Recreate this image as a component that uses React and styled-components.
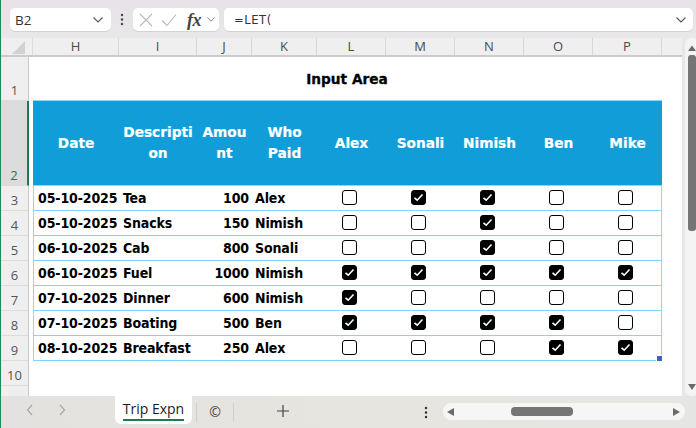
import React from "react";
import styled, { createGlobalStyle } from "styled-components";

const Global = createGlobalStyle`
  html, body { margin: 0; padding: 0; background: #e8e6e8; }
  * { box-sizing: border-box; }
`;

const columns = [
  { key: "H", w: 86 },
  { key: "I", w: 78 },
  { key: "J", w: 55 },
  { key: "K", w: 65 },
  { key: "L", w: 69 },
  { key: "M", w: 69 },
  { key: "N", w: 69 },
  { key: "O", w: 69 },
  { key: "P", w: 69 },
];
const gridTemplate = columns.map((c) => `${c.w}px`).join(" ");

const rows = [
  ["05-10-2025", "Tea", 100, "Alex", [0, 1, 1, 0, 0]],
  ["05-10-2025", "Snacks", 150, "Nimish", [0, 0, 1, 0, 0]],
  ["06-10-2025", "Cab", 800, "Sonali", [0, 0, 1, 0, 0]],
  ["06-10-2025", "Fuel", 1000, "Nimish", [1, 1, 1, 1, 1]],
  ["07-10-2025", "Dinner", 600, "Nimish", [1, 0, 0, 0, 0]],
  ["07-10-2025", "Boating", 500, "Ben", [1, 1, 1, 1, 0]],
  ["08-10-2025", "Breakfast", 250, "Alex", [0, 0, 0, 1, 1]],
];
const rowNums = [
  { n: 1, h: 44 },
  { n: 2, h: 85, active: true },
  { n: 3, h: 25 },
  { n: 4, h: 25 },
  { n: 5, h: 25 },
  { n: 6, h: 25 },
  { n: 7, h: 25 },
  { n: 8, h: 25 },
  { n: 9, h: 25 },
  { n: 10, h: 25 },
];

const Page = styled.div`
  width: 696px;
  height: 428px;
  overflow: hidden;
  display: flex;
  flex-direction: column;
  background: #e8e6e8;
  border-left: 1px solid #1f8a55;
  font-family: "Liberation Sans", Arial, sans-serif;
`;

const FormulaBar = styled.div`
  height: 38px;
  flex: none;
  display: flex;
  align-items: flex-start;
  padding: 8px 3px 0 9px;
  background: linear-gradient(#e6e2e7, #eae7ea);
  font-family: "Open Sans", sans-serif;
  font-size: 13px;
  color: #333;
`;

const Field = styled.div`
  height: 23px;
  background: #fff;
  border-radius: 5px;
  box-shadow: 0 1px 0 #d4d2d4;
  display: flex;
  align-items: center;
`;
const NameBox = styled(Field)`
  width: 101px;
  padding: 0 7px 0 5px;
  justify-content: space-between;
  font-size: 13.5px;
`;
const Kebab = styled.div`
  width: 22px;
  flex: none;
  display: flex;
  justify-content: center;
  height: 23px;
  align-items: center;
`;
const FnBox = styled(Field)`
  width: 86px;
  padding-left: 6px;
  gap: 8px;
`;
const FormulaInput = styled(Field)`
  margin-left: 5px;
  width: 469px;
  padding: 0 6px 0 10px;
  justify-content: space-between;
  font-family: "DejaVu Sans", sans-serif;
  font-size: 11.5px;
  letter-spacing: 0.6px;
`;
const FxText = styled.span`
  font-family: "Liberation Serif", serif;
  font-style: italic;
  font-weight: 700;
  font-size: 18px;
  line-height: 20px;
  color: #444;
  margin-left: 2px;
  letter-spacing: -0.5px;
`;
const FxChevron = styled.svg`
  margin-left: -3px;
`;

const Middle = styled.div`
  flex: 1;
  min-height: 0;
  display: flex;
`;
const SheetPane = styled.div`
  width: 681px;
  flex: none;
  display: flex;
  flex-direction: column;
  background: #fff;
`;
const ColHeaderRow = styled.div`
  height: 19px;
  flex: none;
  display: flex;
  background: #efefef;
  border-bottom: 2px solid #cbcbcb;
`;
const Corner = styled.div`
  width: 32px;
  flex: none;
  border-right: 1px solid #dcdcdc;
  display: flex;
  justify-content: flex-end;
  align-items: flex-end;
  padding: 0 7px 1px 0;
`;
const ColHeader = styled.div`
  width: ${(p) => p.$w}px;
  flex: none;
  text-align: center;
  font-size: 13px;
  line-height: 17px;
  color: #4a4a4a;
  border-right: 1px solid #d8d8d8;
  font-family: "Open Sans", sans-serif;
`;

const SheetBody = styled.div`
  flex: 1;
  min-height: 0;
  display: flex;
`;
const RowHeaders = styled.div`
  width: 28px;
  flex: none;
  display: flex;
  flex-direction: column;
  background: #efefef;
  border-right: 1px solid #c9c9c9;
`;
const RowHeader = styled.div`
  height: ${(p) => p.$h}px;
  flex: none;
  display: flex;
  align-items: flex-end;
  justify-content: center;
  padding-bottom: 1px;
  font-family: "Open Sans", sans-serif;
  font-size: 13px;
  line-height: 17px;
  margin-right: ${(p) => (p.$active ? "-1px" : "0")};
  color: ${(p) => (p.$active ? "#1f7a4c" : "#555")};
  background: ${(p) => (p.$active ? "#dcdcdc" : "transparent")};
  border-bottom: 1px solid #dcdcdc;
  border-right: ${(p) => (p.$active ? "2px solid #1f7a4c" : "none")};
`;

const Cells = styled.div`
  flex: 1;
  padding-left: 4px;
  font-family: "DejaVu Sans", Verdana, sans-serif;
  font-weight: 700;
  color: #000;
`;
const Title = styled.div`
  height: 43px;
  width: 628px;
  display: flex;
  align-items: center;
  justify-content: center;
  font-size: 13.7px;
  -webkit-text-stroke: 0.3px #000;
`;
const Table = styled.div`
  width: 629px;
  position: relative;
  border-left: 1px solid #8ad9f7;
  border-right: 1px solid #8ad9f7;
`;
const HeadRow = styled.div`
  height: 86px;
  display: grid;
  grid-template-columns: ${gridTemplate};
  background: #109dd8;
  color: #fff;
  margin: 0 -1px;
  border-top: 1px solid #8ad9f7;
  border-bottom: 1px solid #8ad9f7;
`;
const HeadCell = styled.div`
  display: flex;
  align-items: center;
  justify-content: center;
  text-align: center;
  padding: 0 1px;
  font-size: 13.7px;
  line-height: 21px;
  overflow-wrap: anywhere;
  min-width: 0;
  -webkit-text-stroke: 0.2px #fff;
`;
const DataRow = styled.div`
  height: 25px;
  display: grid;
  grid-template-columns: ${gridTemplate};
  align-items: center;
  margin-left: -1px;
  border-bottom: 1px solid #7fd6fa;
  font-family: "DejaVu Sans Condensed", "DejaVu Sans", sans-serif;
  font-stretch: condensed;
  font-size: 14px;
  letter-spacing: -0.12px;
`;
const TextCell = styled.div`
  padding: 0 0 0 ${(p) => p.$pad}px;
  white-space: nowrap;
`;
const NumCell = styled.div`
  text-align: right;
  padding: 0 3px 0 0;
  white-space: nowrap;
`;
const CheckCell = styled.div`
  display: flex;
  justify-content: center;
  padding: 0 4px 2px 0;
`;
const Box = styled.div`
  width: 15px;
  height: 15px;
  border-radius: 3px;
  border: 1.5px solid #000;
  background: ${(p) => (p.$on ? "#000" : "#fff")};
  display: flex;
  align-items: center;
  justify-content: center;
`;
const Handle = styled.div`
  position: absolute;
  right: -1px;
  bottom: 0;
  width: 5px;
  height: 5px;
  background: #2a6fb8;
  border-left: 1px solid #fff;
  border-top: 1px solid #fff;
  box-sizing: content-box;
`;

const VScroll = styled.div`
  width: 14px;
  margin-left: 3px;
  flex: none;
  background: #f4f4f4;
  border-radius: 6px;
  display: flex;
  flex-direction: column;
  align-items: center;
  padding: 6px 0 5px;
  height: 358px;
  justify-content: space-between;
`;
const VThumb = styled.div`
  width: 8px;
  height: 176px;
  border-radius: 3px;
  background: #757575;
  margin-top: 3px;
  margin-bottom: auto;
`;

const BottomBar = styled.div`
  height: 32px;
  flex: none;
  display: flex;
  background: linear-gradient(90deg, #e4e2e0, #e6e5df 60%, #e5e5e3);
`;
const NavArea = styled.div`
  width: 114px;
  flex: none;
  display: flex;
  gap: 24px;
  padding: 8px 0 0 25px;
`;
const Tab = styled.div`
  width: 77px;
  height: 28px;
  flex: none;
  background: #fff;
  border-radius: 0 0 6px 6px;
  font-family: "Open Sans", sans-serif;
  font-size: 14px;
  color: #1c1c1c;
  text-align: center;
  padding-top: 3px;
  position: relative;
  &::after {
    content: "";
    position: absolute;
    left: 8px;
    right: 8px;
    bottom: 3px;
    height: 2px;
    background: #1f7a4c;
  }
`;
const Sep = styled.div`
  width: 1px;
  height: 19px;
  margin: 7px 0 0 ${(p) => p.$ml || 0}px;
  background: #cfcfcf;
  flex: none;
`;
const OtherTab = styled.div`
  width: 36px;
  flex: none;
  text-align: center;
  font-family: "Open Sans", sans-serif;
  font-size: 14px;
  color: #444;
  padding-top: 6px;
`;
const AddTab = styled.div`
  margin-left: 43px;
  padding-top: 9px;
  flex: none;
  display: flex;
`;
const TabKebab = styled.div`
  margin-left: 135px;
  padding-top: 10px;
  flex: none;
  display: flex;
`;
const HScroll = styled.div`
  margin: 7px 0 0 15px;
  width: 242px;
  height: 17px;
  border-radius: 8px;
  background: #f6f6f6;
  flex: none;
  display: flex;
  align-items: center;
  padding: 0 5px 0 4px;
`;
const HThumb = styled.div`
  width: 62px;
  height: 9px;
  border-radius: 4px;
  background: #757575;
  margin: 0 auto 0 56px;
`;

const Chevron = ({ w = 12 }) => (
  <svg width={w} height="8" viewBox="0 0 12 8" fill="none">
    <path d="M1.5 1.5 L6 6 L10.5 1.5" stroke="#555" strokeWidth="1.1" />
  </svg>
);
const Dots = ({ color = "#444", r = 1.2, gap = 4.5 }) => (
  <svg width="4" height="13" viewBox="0 0 4 13">
    {[0, 1, 2].map((i) => (
      <circle key={i} cx="2" cy={2 + i * gap} r={r} fill={color} />
    ))}
  </svg>
);
const Tick = () => (
  <svg width="11" height="9" viewBox="0 0 11 9" fill="none">
    <path d="M1.5 4.8 L4.2 7.2 L9.5 1.5" stroke="#fff" strokeWidth="1.6" />
  </svg>
);
const Tri = ({ d, w = 8, h = 8 }) => (
  <svg width={w} height={h} viewBox="0 0 8 8">
    <path d={d} fill="#6a6a6a" />
  </svg>
);
const Nav = ({ d }) => (
  <svg width="8" height="12" viewBox="0 0 8 12" fill="none">
    <path d={d} stroke="#a8a8a8" strokeWidth="1.2" />
  </svg>
);

const names = ["Alex", "Sonali", "Nimish", "Ben", "Mike"];

export default function App() {
  return (
    <Page>
      <Global />
      <FormulaBar>
        <NameBox>
          <span>B2</span>
          <Chevron />
        </NameBox>
        <Kebab>
          <Dots />
        </Kebab>
        <FnBox>
          <svg width="14" height="14" viewBox="0 0 14 14" fill="none">
            <path d="M1 1 L13 13 M13 1 L1 13" stroke="#b9b9b9" strokeWidth="1.1" />
          </svg>
          <svg width="16" height="14" viewBox="0 0 16 14" fill="none">
            <path d="M1 7.5 L6 12.5 L15 1.5" stroke="#b9b9b9" strokeWidth="1.1" />
          </svg>
          <FxText>fx</FxText>
          <FxChevron width="10" height="7" viewBox="0 0 12 8" fill="none">
            <path d="M1.5 1.5 L6 6 L10.5 1.5" stroke="#777" strokeWidth="1.1" />
          </FxChevron>
        </FnBox>
        <FormulaInput>
          <span>=LET(</span>
          <Chevron />
        </FormulaInput>
      </FormulaBar>
      <Middle>
        <SheetPane>
          <ColHeaderRow>
            <Corner>
              <svg width="13" height="13" viewBox="0 0 13 13">
                <path d="M13 0 V13 H0 Z" fill="#d2d2d2" />
              </svg>
            </Corner>
            {columns.map((c) => (
              <ColHeader key={c.key} $w={c.w}>
                {c.key}
              </ColHeader>
            ))}
          </ColHeaderRow>
          <SheetBody>
            <RowHeaders>
              {rowNums.map((r) => (
                <RowHeader key={r.n} $h={r.h} $active={r.active}>
                  {r.n}
                </RowHeader>
              ))}
            </RowHeaders>
            <Cells>
              <Title>Input Area</Title>
              <Table>
                <HeadRow>
                  <HeadCell>Date</HeadCell>
                  <HeadCell>Description</HeadCell>
                  <HeadCell>Amount</HeadCell>
                  <HeadCell>Who Paid</HeadCell>
                  {names.map((n) => (
                    <HeadCell key={n}>{n}</HeadCell>
                  ))}
                </HeadRow>
                {rows.map((r, i) => (
                  <DataRow key={i}>
                    <TextCell $pad={5}>{r[0]}</TextCell>
                    <TextCell $pad={4}>{r[1]}</TextCell>
                    <NumCell>{r[2]}</NumCell>
                    <TextCell $pad={3}>{r[3]}</TextCell>
                    {r[4].map((v, j) => (
                      <CheckCell key={j}>
                        <Box $on={!!v}>{v ? <Tick /> : null}</Box>
                      </CheckCell>
                    ))}
                  </DataRow>
                ))}
                <Handle />
              </Table>
            </Cells>
          </SheetBody>
        </SheetPane>
        <VScroll>
          <Tri d="M4 1.5 L8 7 H0 Z" />
          <VThumb />
          <Tri d="M0 1 H8 L4 7 Z" />
        </VScroll>
      </Middle>
      <BottomBar>
        <NavArea>
          <Nav d="M6 1 L1.5 6 L6 11" />
          <Nav d="M2 1 L6.5 6 L2 11" />
        </NavArea>
        <Tab>Trip Expn</Tab>
        <Sep $ml={4} />
        <OtherTab>©</OtherTab>
        <Sep />
        <AddTab>
          <svg width="12" height="12" viewBox="0 0 12 12">
            <path d="M6 0 V12 M0 6 H12" stroke="#444" strokeWidth="1.2" />
          </svg>
        </AddTab>
        <TabKebab>
          <Dots color="#333" />
        </TabKebab>
        <HScroll>
          <Tri d="M0 4 L7 0 V8 Z" />
          <HThumb />
          <Tri d="M1 0 L8 4 L1 8 Z" />
        </HScroll>
      </BottomBar>
    </Page>
  );
}
